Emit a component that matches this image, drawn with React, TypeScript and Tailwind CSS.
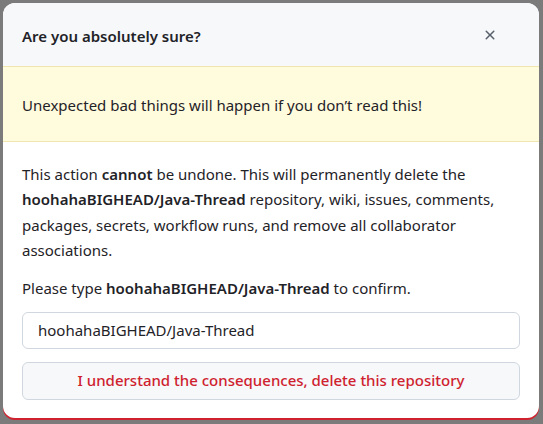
import React from 'react';

export default function App() {
  return (
    <div
      className="w-[543px] h-[424px] bg-[#7b7b7b] p-[3px] pr-[4px] overflow-hidden"
      style={{ fontFamily: '"Noto Sans", "Open Sans", sans-serif' }}
    >
      <div className="flex flex-col h-[415px] bg-white rounded-xl overflow-hidden shadow-[0_2px_0_#cf222e]">
        {/* header */}
        <div className="flex items-center justify-between h-[64px] pl-[19px] pr-[33px] bg-[#f6f8fa] border-b border-[#f1e5b0]">
          <h1 className="pt-[3px] text-[15px] font-semibold text-[#1f2328]">Are you absolutely sure?</h1>
          <button className="w-8 h-8 flex items-center justify-center text-[#57606a]" aria-label="Close">
            <svg width="16" height="16" viewBox="0 0 16 16" fill="currentColor">
              <path d="M3.72 3.72a.75.75 0 0 1 1.06 0L8 6.94l3.22-3.22a.749.749 0 0 1 1.275.326.749.749 0 0 1-.215.734L9.06 8l3.22 3.22a.749.749 0 0 1-.326 1.275.749.749 0 0 1-.734-.215L8 9.06l-3.22 3.22a.751.751 0 0 1-1.042-.018.751.751 0 0 1-.018-1.042L6.94 8 3.72 4.78a.75.75 0 0 1 0-1.06Z" />
            </svg>
          </button>
        </div>

        {/* flash */}
        <div className="flex items-center h-[75px] px-[19px] pt-[3px] bg-[#fffbdd] border-b border-[#f1e5b0] text-[15px] text-[#1f2328]">
          Unexpected bad things will happen if you don’t read this!
        </div>

        {/* body */}
        <div className="px-[19px] pt-[20px] text-[15px] text-[#1f2328]">
          <p className="leading-[25.4px]">
            This action <b className="font-semibold">cannot</b> be undone. This will permanently delete the{' '}
            <b className="font-semibold">hoohahaBIGHEAD/Java-Thread</b> repository, wiki, issues, comments, packages, secrets,
            workflow runs, and remove all collaborator associations.
          </p>
          <p className="mt-[12px] leading-[25px]">
            Please type <b className="font-semibold">hoohahaBIGHEAD/Java-Thread</b> to confirm.
          </p>
          <div className="mt-[11px] h-[37px] flex items-center px-[15px] border border-[#d0d7de] rounded-md text-[15px] text-[#1f2328]">
            hoohahaBIGHEAD/Java-Thread
          </div>
          <button className="mt-[13px] w-full h-[38px] flex items-center justify-center border border-[#d0d7de] rounded-md bg-[#f6f8fa] text-[15px] font-medium text-[#cf222e]">
            I understand the consequences, delete this repository
          </button>
        </div>
      </div>
    </div>
  );
}
